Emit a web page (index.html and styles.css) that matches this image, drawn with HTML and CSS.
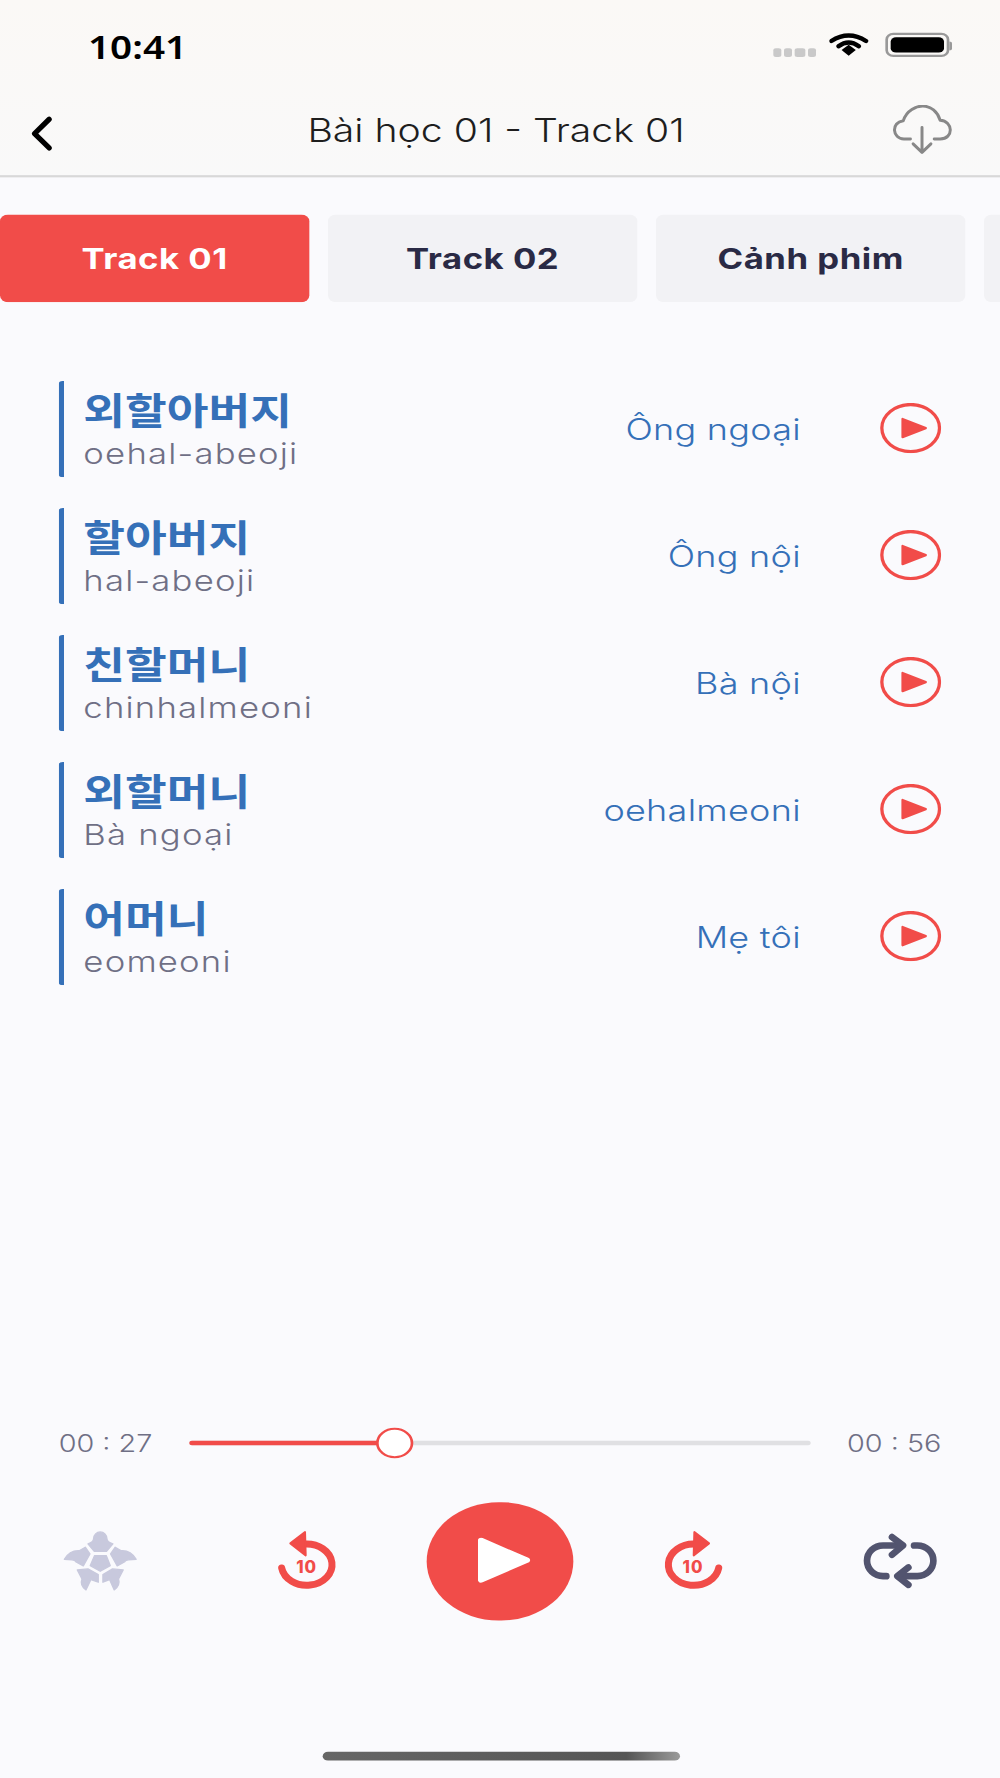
FILE: index.html
```html
<!DOCTYPE html>
<html lang="vi">
<head>
    <meta charset="UTF-8">
    <meta name="viewport" content="width=device-width, initial-scale=1.0">
    <title>Bài học 01 - Track 01</title>
    <link rel="stylesheet" href="styles.css">
</head>
<body>

<div class="app">
    <div class="top-bar">
        <div class="status-bar">
            <div class="time">10:41</div>
            <div class="status-icons">
                <div class="signal"><span></span><span></span><span></span><span></span></div>
                <svg class="wifi" viewBox="0 0 38 24" preserveAspectRatio="none">
                    <path d="M2 8.5 Q19 -3 36 8.5" fill="none" stroke="#000" stroke-width="4.5" stroke-linecap="round"/>
                    <path d="M9 14 Q19 6 29 14" fill="none" stroke="#000" stroke-width="4.5" stroke-linecap="round"/>
                    <path d="M12 18 L19 12.5 L26 18 L19 24 Z" fill="#000"/>
                </svg>
                <div class="battery"><div class="battery-fill"></div></div>
                <div class="battery-tip"></div>
            </div>
        </div>
        <div class="header">
            <div class="header-side">
                <svg class="back" viewBox="0 0 23 33" preserveAspectRatio="none">
                    <path d="M19 3 L5 16.5 L19 30" fill="none" stroke="#000" stroke-width="5" stroke-linecap="round" stroke-linejoin="round"/>
                </svg>
            </div>
            <div class="header-title">Bài học 01 - Track 01</div>
            <div class="header-side header-side-right">
                <svg class="cloud" viewBox="0 0 190 150" preserveAspectRatio="none">
                    <path d="M60 103 H40 C5 103 0 52 38 48 C48 15 78 3 97 3 C122 3 142 20 150 46 C190 48 192 103 150 103 H132" fill="none" stroke="#888" stroke-width="9" stroke-linecap="round" stroke-linejoin="round"/>
                    <path d="M95 68 V143 M68 118 L95 144 L122 118" fill="none" stroke="#888" stroke-width="9" stroke-linecap="round" stroke-linejoin="round"/>
                </svg>
            </div>
        </div>
    </div>

    <div class="tabs">
        <div class="tab active">Track 01</div>
        <div class="tab">Track 02</div>
        <div class="tab">Cảnh phim</div>
        <div class="tab"></div>
    </div>

    <div class="word-list">
        <div class="word">
            <div class="word-text">
                <div class="korean">외할아버지</div>
                <div class="roman">oehal-abeoji</div>
            </div>
            <div class="meaning">Ông ngoại</div>
            <svg class="word-play" viewBox="0 0 185 150" preserveAspectRatio="none">
                <ellipse cx="92.5" cy="75" rx="87" ry="70" fill="none" stroke="#F14C49" stroke-width="10"/>
                <path d="M68 48 L138 75 L68 102 Z" fill="#F14C49" stroke="#F14C49" stroke-width="7" stroke-linejoin="round"/>
            </svg>
        </div>
        <div class="word">
            <div class="word-text">
                <div class="korean">할아버지</div>
                <div class="roman">hal-abeoji</div>
            </div>
            <div class="meaning">Ông nội</div>
            <svg class="word-play" viewBox="0 0 185 150" preserveAspectRatio="none">
                <ellipse cx="92.5" cy="75" rx="87" ry="70" fill="none" stroke="#F14C49" stroke-width="10"/>
                <path d="M68 48 L138 75 L68 102 Z" fill="#F14C49" stroke="#F14C49" stroke-width="7" stroke-linejoin="round"/>
            </svg>
        </div>
        <div class="word">
            <div class="word-text">
                <div class="korean">친할머니</div>
                <div class="roman">chinhalmeoni</div>
            </div>
            <div class="meaning">Bà nội</div>
            <svg class="word-play" viewBox="0 0 185 150" preserveAspectRatio="none">
                <ellipse cx="92.5" cy="75" rx="87" ry="70" fill="none" stroke="#F14C49" stroke-width="10"/>
                <path d="M68 48 L138 75 L68 102 Z" fill="#F14C49" stroke="#F14C49" stroke-width="7" stroke-linejoin="round"/>
            </svg>
        </div>
        <div class="word">
            <div class="word-text">
                <div class="korean">외할머니</div>
                <div class="roman">Bà ngoại</div>
            </div>
            <div class="meaning">oehalmeoni</div>
            <svg class="word-play" viewBox="0 0 185 150" preserveAspectRatio="none">
                <ellipse cx="92.5" cy="75" rx="87" ry="70" fill="none" stroke="#F14C49" stroke-width="10"/>
                <path d="M68 48 L138 75 L68 102 Z" fill="#F14C49" stroke="#F14C49" stroke-width="7" stroke-linejoin="round"/>
            </svg>
        </div>
        <div class="word">
            <div class="word-text">
                <div class="korean">어머니</div>
                <div class="roman">eomeoni</div>
            </div>
            <div class="meaning">Mẹ tôi</div>
            <svg class="word-play" viewBox="0 0 185 150" preserveAspectRatio="none">
                <ellipse cx="92.5" cy="75" rx="87" ry="70" fill="none" stroke="#F14C49" stroke-width="10"/>
                <path d="M68 48 L138 75 L68 102 Z" fill="#F14C49" stroke="#F14C49" stroke-width="7" stroke-linejoin="round"/>
            </svg>
        </div>
    </div>

    <div class="player">
        <div class="progress-row">
            <div class="time-label">00 : 27</div>
            <div class="track">
                <div class="track-done"></div>
                <div class="thumb"></div>
            </div>
            <div class="time-label">00 : 56</div>
        </div>
        <div class="controls">
            <!-- rua: che do cham -->
            <svg class="turtle" viewBox="60 60 234 186" preserveAspectRatio="none">
                <g fill="#C8C9DD" stroke="#C8C9DD" stroke-width="4" stroke-linejoin="round">
                    <path d="M140 100 Q157 95 157 84 A20 20 0 0 1 197 84 Q197 95 215 100 L196 122 H159 Z"/>
                    <path d="M160 135 H195 L207 165 L177 182 L147 165 Z"/>
                    <path d="M132 110 L146 130 L126 166 L103 153 Q100 146 69 146 Q85 118 115 120 Z"/>
                    <path d="M222 110 L208 130 L228 166 L251 153 Q254 146 285 146 Q269 118 239 120 Z"/>
                    <path d="M108 178 L140 175 L171 192 V215 L149 207 L134 238 Q115 224 122 205 Z"/>
                    <path d="M246 178 L214 175 L185 192 V215 L205 207 L219 238 Q238 224 232 205 Z"/>
                </g>
            </svg>
            <svg class="skip" viewBox="825 385 195 190" preserveAspectRatio="none">
                <path d="M846 504 A76 62 0 1 0 915 432" fill="none" stroke="#F14C49" stroke-width="21" stroke-linecap="round"/>
                <path d="M872 430 L916 396 L918 466 Z" fill="#F14C49" stroke="#F14C49" stroke-width="6" stroke-linejoin="round"/>
                <text class="skip-text" x="921" y="520">10</text>
            </svg>
            <div class="main-play">
                <svg class="main-play-icon" viewBox="0 0 21 22" preserveAspectRatio="none">
                    <path d="M1.5 1.5 L19.5 11 L1.5 20.5 Z" fill="#fff" stroke="#fff" stroke-width="2.5" stroke-linejoin="round"/>
                </svg>
            </div>
            <svg class="skip" viewBox="485 385 195 190" preserveAspectRatio="none">
                <path d="M657 504 A76 62 0 1 1 586 432" fill="none" stroke="#F14C49" stroke-width="21" stroke-linecap="round"/>
                <path d="M628 430 L584 396 L582 466 Z" fill="#F14C49" stroke="#F14C49" stroke-width="6" stroke-linejoin="round"/>
                <text class="skip-text" x="580" y="520">10</text>
            </svg>
            <svg class="repeat" viewBox="1080 400 235 170" preserveAspectRatio="none">
                <g fill="none" stroke="#52546F" stroke-width="20" stroke-linecap="round" stroke-linejoin="round">
                    <path d="M1200 438 H1145 A48 46 0 0 0 1145 530 H1155"/>
                    <path d="M1172 413 L1205 438 L1172 466"/>
                    <path d="M1238 438 H1248 A48 46 0 0 1 1248 530 H1192"/>
                    <path d="M1221 504 L1188 530 L1221 556"/>
                </g>
            </svg>
        </div>
        <div class="home-indicator"></div>
    </div>
</div>

</body>
</html>
```

FILE: styles.css
```css
html, body {
    margin: 0;
    height: 100%;
    background-color: #FAFAFD;
    overflow: hidden;
}
/* pantalla de 375x812 estirada a 1000x1778 */
.app {
    width: 375px;
    height: 812px;
    transform: scale(2.6667, 2.1897);
    transform-origin: 0 0;
    background-color: #FAFAFD;
    font-family: Inter, "Noto Sans CJK KR", sans-serif;
    display: flex;
    flex-direction: column;
}
.top-bar {
    background: linear-gradient(#FBF9F6, #F9F9F9);
    border-bottom: 0.5px solid #D8D8D8;
}
.status-bar {
    height: 44px;
    display: flex;
    align-items: center;
    justify-content: space-between;
    padding: 0 18px 3px 33px;
    box-sizing: border-box;
}
.time {
    font-family: "Noto Sans", sans-serif;
    font-size: 14.5px;
    font-weight: 600;
    color: #000;
}
.status-icons {
    display: flex;
    align-items: center;
}
.signal {
    display: flex;
    gap: 1px;
    margin-top: 7px;
    margin-right: 5px;
}
.signal span {
    width: 3.4px;
    height: 3.4px;
    border-radius: 1px;
    background-color: #C9C9C9;
}
.wifi {
    width: 14.5px;
    height: 10.5px;
    margin-right: 6px;
}
.battery {
    width: 24px;
    height: 10.5px;
    border: 0.8px solid #999;
    border-radius: 3px;
    box-sizing: border-box;
    padding: 1px;
}
.battery-fill {
    height: 100%;
    background-color: #000;
    border-radius: 2px;
}
.battery-tip {
    width: 1.3px;
    height: 4px;
    background-color: #999;
    border-radius: 0 1px 1px 0;
}
.header {
    height: 35.5px;
    display: grid;
    grid-template-columns: 1fr auto 1fr;
    align-items: center;
    padding: 0 18px 2px 11px;
    box-sizing: border-box;
}
.header-side {
    display: flex;
    align-items: center;
}
.header-side-right {
    justify-content: flex-end;
}
.back {
    width: 9px;
    height: 16px;
}
.cloud {
    width: 23.5px;
    height: 22.5px;
    margin-top: -3px;
}
.header-title {
    text-align: center;
    font-size: 14.7px;
    font-weight: 300;
    color: #1E1E1E;
    margin-left: 4px;
    padding-bottom: 2px;
}
.tabs {
    display: flex;
    gap: 7px;
    margin-top: 17.5px;
    width: 375px;
    overflow: hidden;
}
.tab {
    flex: 0 0 116px;
    height: 39.5px;
    border-radius: 3px;
    background-color: #F2F2F5;
    color: #2A2A45;
    font-size: 13px;
    font-weight: 700;
    letter-spacing: 0.2px;
    display: flex;
    align-items: center;
    justify-content: center;
}
.tab.active {
    background-color: #F14C49;
    color: #FFFFFF;
}
.word-list {
    margin-top: 36.5px;
    padding: 0 22px 0 21.75px;
    display: flex;
    flex-direction: column;
    gap: 14px;
}
.word {
    height: 44px;
    display: flex;
    align-items: center;
    border-left: 2.75px solid #3570B8;
    border-radius: 1.5px;
    padding-left: 7.5px;
}
.word-text {
    flex: 1;
    padding-bottom: 2px;
}
.korean {
    font-size: 17px;
    font-weight: 700;
    line-height: 23px;
    color: #3570B8;
}
.roman {
    font-size: 13px;
    font-weight: 300;
    letter-spacing: 0.45px;
    line-height: 14px;
    color: #6F6F85;
}
.meaning {
    font-size: 13.5px;
    font-weight: 300;
    letter-spacing: 0.1px;
    color: #3570B8;
    margin-right: 29.7px;
}
.word-play {
    width: 23px;
    height: 23px;
    margin-bottom: 1px;
}
.player {
    margin-top: auto;
}
.progress-row {
    display: flex;
    align-items: center;
    padding: 0.5px 22px 0;
    height: 14px;
}
.time-label {
    font-size: 10.8px;
    font-weight: 300;
    color: #6F6F85;
    width: 48.5px;
    white-space: nowrap;
}
.time-label:last-child {
    width: auto;
    margin-left: 13.5px;
}
.track {
    flex: 1;
    height: 2.7px;
    border-radius: 2px;
    background-color: #E0E0E3;
    position: relative;
}
.track-done {
    width: 33.3%;
    height: 100%;
    border-radius: 2px;
    background-color: #F14C49;
}
.thumb {
    position: absolute;
    left: 33.3%;
    top: -5.6px;
    width: 14px;
    height: 14px;
    margin-left: -7px;
    border: 0.8px solid #F14C49;
    border-radius: 50%;
    box-sizing: border-box;
    background-color: #FFFFFF;
}
.controls {
    display: grid;
    grid-template-columns: 75px 80px 65px 80px 75px;
    align-items: center;
    justify-items: center;
    margin-top: 19.5px;
}
.turtle {
    width: 29.2px;
    height: 28.3px;
}
.skip {
    width: 24.4px;
    height: 28.9px;
}
.skip-text {
    font-family: Inter, sans-serif;
    font-size: 50px;
    font-weight: 800;
    letter-spacing: 3px;
    fill: #F14C49;
    text-anchor: middle;
}
.repeat {
    width: 29.4px;
    height: 25.9px;
}
.main-play {
    width: 54.5px;
    height: 54.5px;
    border-radius: 50%;
    background-color: #F14C49;
    display: flex;
    align-items: center;
    justify-content: center;
}
.main-play-icon {
    width: 20px;
    height: 21px;
    margin-left: 3px;
}
.home-indicator {
    width: 134px;
    height: 4.5px;
    margin: 59.5px auto 8px;
    border-radius: 3px;
    background: linear-gradient(90deg, #666 0%, #555 85%, #9A9A9A 100%);
}
```
